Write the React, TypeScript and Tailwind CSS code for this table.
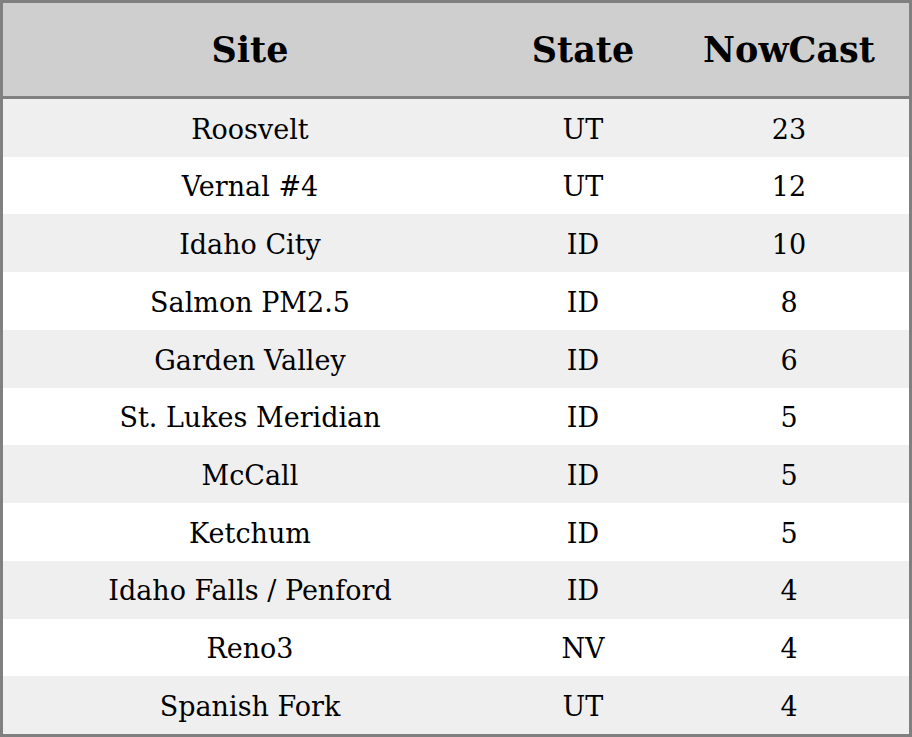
const rows = [
  { site: "Roosvelt", state: "UT", now: 23 },
  { site: "Vernal #4", state: "UT", now: 12 },
  { site: "Idaho City", state: "ID", now: 10 },
  { site: "Salmon PM2.5", state: "ID", now: 8 },
  { site: "Garden Valley", state: "ID", now: 6 },
  { site: "St. Lukes Meridian", state: "ID", now: 5 },
  { site: "McCall", state: "ID", now: 5 },
  { site: "Ketchum", state: "ID", now: 5 },
  { site: "Idaho Falls / Penford", state: "ID", now: 4 },
  { site: "Reno3", state: "NV", now: 4 },
  { site: "Spanish Fork", state: "UT", now: 4 },
];

const App = () => {
  return (
    <div
      className="w-[912px] h-[737px] border-[3px] border-[#808080] bg-white text-black flex flex-col"
      style={{ fontFamily: '"DejaVu Serif", serif' }}
    >
      {/* Header */}
      <div className="grid grid-cols-[494px_172px_240px] h-[96px] shrink-0 items-center bg-[#cfcfcf] border-b-[3px] border-[#808080] pt-[2px] text-[35px] font-bold">
        <div className="text-center">Site</div>
        <div className="text-center">State</div>
        <div className="text-center">NowCast</div>
      </div>

      {/* Rows */}
      <div className="flex flex-col flex-1">
        {rows.map((r, i) => (
          <div
            key={r.site}
            className={`grid grid-cols-[494px_172px_240px] flex-1 items-center pt-1 text-[27px] ${
              i % 2 === 0 ? "bg-[#efefef]" : "bg-white"
            }`}
          >
            <div className="text-center">{r.site}</div>
            <div className="text-center">{r.state}</div>
            <div className="text-center">{r.now}</div>
          </div>
        ))}
      </div>
    </div>
  );
};

export default App;
